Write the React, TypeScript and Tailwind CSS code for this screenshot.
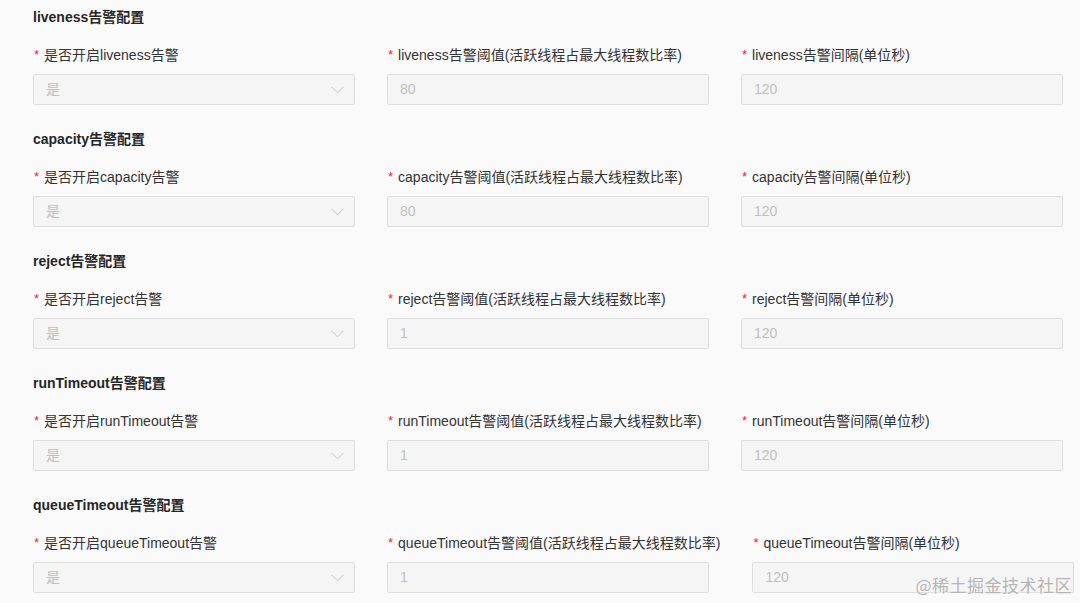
import React from "react";

type Sec = { name: string; threshold: string; interval: string };

const sections: Sec[] = [
  { name: "liveness", threshold: "80", interval: "120" },
  { name: "capacity", threshold: "80", interval: "120" },
  { name: "reject", threshold: "1", interval: "120" },
  { name: "runTimeout", threshold: "1", interval: "120" },
  { name: "queueTimeout", threshold: "1", interval: "120" },
];

const font = { fontFamily: '"Liberation Sans", "Noto Sans CJK SC", sans-serif' };

function Label({ text }: { text: string }) {
  return (
    <div className="h-[22px] leading-[22px] text-[14px] text-[#333333] whitespace-nowrap flex items-center">
      <span className="text-[#f5222d] mr-[5px] text-[13px] ml-[1px] leading-[22px]">*</span>
      <span>{text}</span>
    </div>
  );
}

function Field({ label, value, select }: { label: string; value: string; select?: boolean }) {
  return (
    <div className="flex flex-col min-w-[322px] w-max">
      <Label text={label} />
      <div className="mt-[8px] w-[322px] h-[31px] bg-[#f5f5f5] border border-[#dedede] rounded-[2px] flex items-center justify-between pl-[12px] pr-[10px] text-[14px] text-[#bfbfbf]">
        <span>{value}</span>
        {select && (
          <svg width="13" height="8" viewBox="0 0 13 8" fill="none">
            <path d="M0.5 0.8 L6.5 6.8 L12.5 0.8" stroke="#c4c4c4" strokeWidth="1" />
          </svg>
        )}
      </div>
    </div>
  );
}

export default function App() {
  return (
    <div className="relative w-[1080px] h-[603px] bg-[#fafafa] overflow-hidden" style={font}>
      <div className="pl-[33px] pt-[7px] flex flex-col">
        {sections.map((s) => (
          <div key={s.name} className="flex flex-col h-[122px]">
            <div className="h-[20px] leading-[20px] text-[14px] font-bold text-[#262626]">
              {s.name}告警配置
            </div>
            <div className="mt-[17px] flex gap-[32px]">
              <Field label={`是否开启${s.name}告警`} value="是" select />
              <Field label={`${s.name}告警阈值(活跃线程占最大线程数比率)`} value={s.threshold} />
              <Field label={`${s.name}告警间隔(单位秒)`} value={s.interval} />
            </div>
          </div>
        ))}
      </div>
      <div
        className="absolute right-[8px] bottom-[6px] text-[17px] text-[#b4b4b4] tracking-[0.5px]"
        style={{ fontFamily: '"Noto Sans CJK SC", sans-serif', textShadow: "0 0 2px #ffffff" }}
      >
        @稀土掘金技术社区
      </div>
    </div>
  );
}
